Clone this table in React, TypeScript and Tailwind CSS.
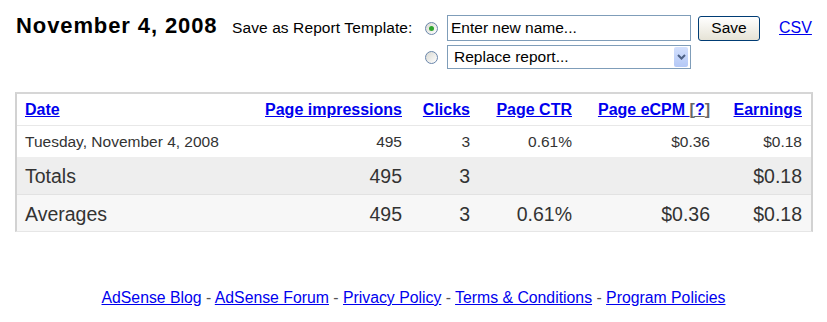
import React from "react";

type Row = {
  label: string;
  impressions: string;
  clicks: string;
  ctr: string;
  ecpm: string;
  earnings: string;
};

const cols = "grid grid-cols-[244px_150px_68px_102px_138px_92px] items-center";

const daily: Row = {
  label: "Tuesday, November 4, 2008",
  impressions: "495",
  clicks: "3",
  ctr: "0.61%",
  ecpm: "$0.36",
  earnings: "$0.18",
};

const footerLinks = [
  "AdSense Blog",
  "AdSense Forum",
  "Privacy Policy",
  "Terms & Conditions",
  "Program Policies",
];

function Radio({ checked }: { checked?: boolean }) {
  return (
    <span className="flex h-[13px] w-[13px] shrink-0 items-center justify-center rounded-full border border-[#6a86ab] bg-gradient-to-br from-[#d9d9d2] to-white">
      {checked && <span className="h-[5px] w-[5px] rounded-full bg-[#2ea52e]" />}
    </span>
  );
}

function SummaryRow({ row }: { row: Row }) {
  return (
    <div className={`${cols} h-full pt-[3px] text-[19.5px] text-[#333]`}>
      <span className="pl-[8px]">{row.label}</span>
      <span className="pr-[9px] text-right">{row.impressions}</span>
      <span className="pr-[9px] text-right">{row.clicks}</span>
      <span className="pr-[9px] text-right">{row.ctr}</span>
      <span className="pr-[9px] text-right">{row.ecpm}</span>
      <span className="pr-[9px] text-right">{row.earnings}</span>
    </div>
  );
}

export default function App() {
  return (
    <div className="min-h-screen w-[827px] bg-white font-['Liberation_Sans',Arial,sans-serif] text-black">
      {/* top bar: date + save template form */}
      <div className="flex items-start pl-[16px] pt-[15px]">
        <h1 className="mt-[-2px] w-[200px] whitespace-nowrap text-[22px] font-bold leading-[26px] tracking-[0.9px]">
          November 4, 2008
        </h1>
        <span className="ml-[16px] w-[180px] whitespace-nowrap text-[15.5px] leading-[26px] tracking-[0.1px]">
          Save as Report Template:
        </span>
        <div className="ml-[13px] flex flex-col gap-[4px]">
          <div className="flex items-center">
            <Radio checked />
            <input
              readOnly
              defaultValue="Enter new name..."
              className="ml-[9px] h-[26px] w-[244px] border border-[#7f9db9] bg-white pl-[3px] text-[15.5px] text-black outline-none"
            />
            <button className="ml-[7px] h-[25px] w-[62px] rounded-[3px] border border-[#003c74] bg-gradient-to-b from-white to-[#e6e3d6] text-[15.5px] leading-none">
              Save
            </button>
            <a href="#" className="ml-[19px] text-[16px] text-[#0000ee] underline">
              CSV
            </a>
          </div>
          <div className="flex items-center">
            <Radio />
            <div className="ml-[9px] flex h-[24px] w-[244px] items-center justify-between border border-[#7f9db9] bg-white pl-[6px] pr-[2px] text-[15.5px]">
              <span>Replace report...</span>
              <span className="flex h-[20px] w-[14px] items-center justify-center rounded-[2px] bg-gradient-to-b from-[#d3e0fd] to-[#b4c8f6]">
                <svg width="9" height="6" viewBox="0 0 9 6">
                  <path d="M1 1 L4.5 4.5 L8 1" fill="none" stroke="#4d6185" strokeWidth="2" />
                </svg>
              </span>
            </div>
          </div>
        </div>
      </div>

      {/* report table */}
      <div className="ml-[15px] mt-[23px] w-[798px] border-x-2 border-t-2 border-b border-x-[#d2d2d2] border-t-[#d6d6d6] border-b-[#e6e6e6]">
        <div className={`${cols} h-[32px] border-b border-[#e8e8e8] text-[16px] font-bold`}>
          <a href="#" className="pl-[8px] text-[#0000ee] underline">Date</a>
          <a href="#" className="pr-[9px] text-right text-[#0000ee] underline">Page impressions</a>
          <a href="#" className="pr-[9px] text-right text-[#0000ee] underline">Clicks</a>
          <a href="#" className="pr-[9px] text-right text-[#0000ee] underline">Page CTR</a>
          <span className="pr-[9px] text-right">
            <a href="#" className="text-[#0000ee] underline">Page eCPM </a>
            <span className="text-[#666] underline">[<span className="text-[#0000ee]">?</span>]</span>
          </span>
          <a href="#" className="pr-[9px] text-right text-[#0000ee] underline">Earnings</a>
        </div>

        <div className={`${cols} h-[31px] pt-[1px] text-[15.5px] text-[#333]`}>
          <span className="pl-[8px]">{daily.label}</span>
          <span className="pr-[9px] text-right">{daily.impressions}</span>
          <span className="pr-[9px] text-right">{daily.clicks}</span>
          <span className="pr-[9px] text-right">{daily.ctr}</span>
          <span className="pr-[9px] text-right">{daily.ecpm}</span>
          <span className="pr-[9px] text-right">{daily.earnings}</span>
        </div>

        <div className="h-[38px] border-b border-[#e2e2e2] bg-[#eeeeee]">
          <SummaryRow row={{ label: "Totals", impressions: "495", clicks: "3", ctr: "", ecpm: "", earnings: "$0.18" }} />
        </div>
        <div className="h-[36px] bg-[#f7f7f7]">
          <SummaryRow row={{ label: "Averages", impressions: "495", clicks: "3", ctr: "0.61%", ecpm: "$0.36", earnings: "$0.18" }} />
        </div>
      </div>

      {/* footer links */}
      <div className="mt-[56px] flex justify-center text-[15.8px] leading-[20px]">
        {footerLinks.map((l, i) => (
          <span key={l} className="whitespace-pre">
            {i > 0 && <span className="text-[#555]"> - </span>}
            <a href="#" className="text-[#0000ee] underline">{l}</a>
          </span>
        ))}
      </div>
    </div>
  );
}
